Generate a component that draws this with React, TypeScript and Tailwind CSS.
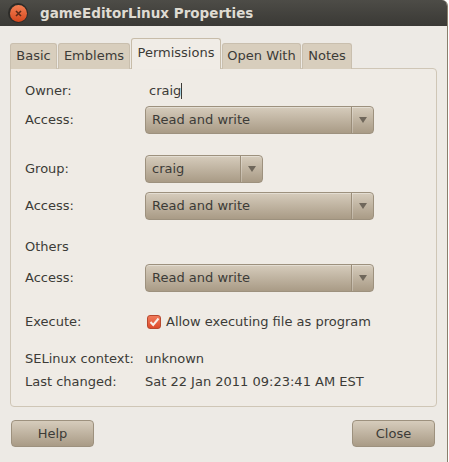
import { useState } from "react";

const font = { fontFamily: '"DejaVu Sans", "Liberation Sans", sans-serif' };

function Combo({ label, width }: { label: string; width: string }) {
  return (
    <div
      className={`${width} h-[28px] flex items-stretch rounded-[4px] border border-[#9d917e] bg-gradient-to-b from-[#d6ccbc] to-[#a99b86] shadow-[inset_0_1px_0_rgba(255,255,255,0.35)]`}
    >
      <div className="flex-1 flex items-center pl-[6px] text-[13px] text-[#3c3b37]">{label}</div>
      <div className="w-[22px] border-l border-[#9a8d79] flex items-center justify-center shadow-[inset_1px_0_0_rgba(255,255,255,0.25)]">
        <svg width="8" height="6" viewBox="0 0 8 6">
          <path d="M0 0 L8 0 L4 6 Z" fill="#6f675b" />
        </svg>
      </div>
    </div>
  );
}

function Row({ label, children, className }: { label: string; children?: React.ReactNode; className: string }) {
  return (
    <div className={`flex items-center ${className}`}>
      <div className="w-[120px] text-[13px] text-[#3c3b37]">{label}</div>
      <div className="flex-1 flex items-center">{children}</div>
    </div>
  );
}

export default function App() {
  const [checked, setChecked] = useState(true);
  const tabs = [
    { name: "Basic", w: "w-[47px]" },
    { name: "Emblems", w: "w-[72px]" },
    { name: "Permissions", w: "w-[90px]" },
    { name: "Open With", w: "w-[79px]" },
    { name: "Notes", w: "w-[50px]" },
  ];

  return (
    <div className="w-[449px] h-[462px] bg-white overflow-hidden" style={font}>
      <div className="w-[448px] h-[462px] flex flex-col bg-[#edeae5] border-r border-[#8a7f6c] rounded-tr-[6px] overflow-hidden">
        {/* Title bar */}
        <div className="h-[26px] flex items-center bg-gradient-to-b from-[#4d4c47] to-[#3a3935]">
          <div className="ml-[8px] w-[20px] h-[20px] rounded-full bg-[#2c2b28] flex items-center justify-center">
            <div className="w-[17px] h-[17px] rounded-full bg-gradient-to-b from-[#f37f52] to-[#d4461b] flex items-center justify-center">
              <svg width="7" height="7" viewBox="0 0 7 7">
                <path d="M1 1 L6 6 M6 1 L1 6" stroke="#5a2a18" strokeWidth="1.6" />
              </svg>
            </div>
          </div>
          <div className="ml-[12px] text-[13.5px] font-bold text-[#dfdbd2]">gameEditorLinux Properties</div>
        </div>

        {/* Tabs */}
        <div className="mt-[12px] ml-[10px] flex items-end gap-px h-[31px] relative z-10">
          {tabs.map((t) => {
            const active = t.name === "Permissions";
            return (
              <div
                key={t.name}
                className={
                  active
                    ? `${t.w} h-[31px] flex items-center justify-center whitespace-nowrap border border-b-0 border-[#c7bca9] rounded-t-[3px] bg-[#f0ece6] text-[13px] text-[#3c3b37] pb-[2px]`
                    : `${t.w} h-[26px] flex items-center justify-center whitespace-nowrap border border-b-0 border-[#c9bfae] rounded-t-[3px] bg-[#d8cebd] text-[13px] text-[#3c3b37] pb-[2px]`
                }
              >
                {t.name}
              </div>
            );
          })}
        </div>

        {/* Panel */}
        <div className="mx-[10px] -mt-px h-[339px] rounded-[4px] rounded-tl-none border border-[#cfc6b6] bg-[#efebe5] pl-[14px] pt-[11px] flex flex-col">
          <Row label="Owner:" className="h-[22px]">
            <span className="ml-[4px] text-[13px] text-[#3c3b37]">craig</span>
            <span className="w-px h-[16px] bg-[#3c3b37]" />
          </Row>
          <Row label="Access:" className="h-[28px] mt-[4px]">
            <Combo label="Read and write" width="w-[229px]" />
          </Row>
          <Row label="Group:" className="h-[28px] mt-[21px]">
            <Combo label="craig" width="w-[118px]" />
          </Row>
          <Row label="Access:" className="h-[28px] mt-[9px]">
            <Combo label="Read and write" width="w-[229px]" />
          </Row>
          <Row label="Others" className="h-[22px] mt-[16px]" />
          <Row label="Access:" className="h-[28px] mt-[6px]">
            <Combo label="Read and write" width="w-[229px]" />
          </Row>
          <Row label="Execute:" className="h-[22px] mt-[19px]">
            <button
              onClick={() => setChecked(!checked)}
              className="ml-[2px] w-[14px] h-[14px] rounded-[3px] border border-[#b8482e] bg-gradient-to-b from-[#f07a5a] to-[#dd4a2a] flex items-center justify-center"
            >
              {checked && (
                <svg width="11" height="10" viewBox="0 0 11 10">
                  <path d="M1.5 5 L4.2 8 L9.5 1.5" stroke="#f6efe9" strokeWidth="2" fill="none" />
                </svg>
              )}
            </button>
            <span className="ml-[5px] text-[13px] text-[#3c3b37]">Allow executing file as program</span>
          </Row>
          <Row label="SELinux context:" className="h-[22px] mt-[15px]">
            <span className="text-[13px] text-[#3c3b37]">unknown</span>
          </Row>
          <Row label="Last changed:" className="h-[22px] mt-[1px]">
            <span className="text-[13px] text-[#3c3b37]">Sat 22 Jan 2011 09:23:41 AM EST</span>
          </Row>
        </div>

        {/* Buttons */}
        <div className="mt-[13px] mx-[11px] flex justify-between">
          <button className="w-[83px] h-[27px] rounded-[4px] border border-[#9d917e] bg-gradient-to-b from-[#d6ccbc] to-[#a99b86] text-[13px] text-[#3c3b37]">
            Help
          </button>
          <button className="mr-[1px] w-[83px] h-[27px] rounded-[4px] border border-[#9d917e] bg-gradient-to-b from-[#d6ccbc] to-[#a99b86] text-[13px] text-[#3c3b37]">
            Close
          </button>
        </div>
      </div>
    </div>
  );
}
